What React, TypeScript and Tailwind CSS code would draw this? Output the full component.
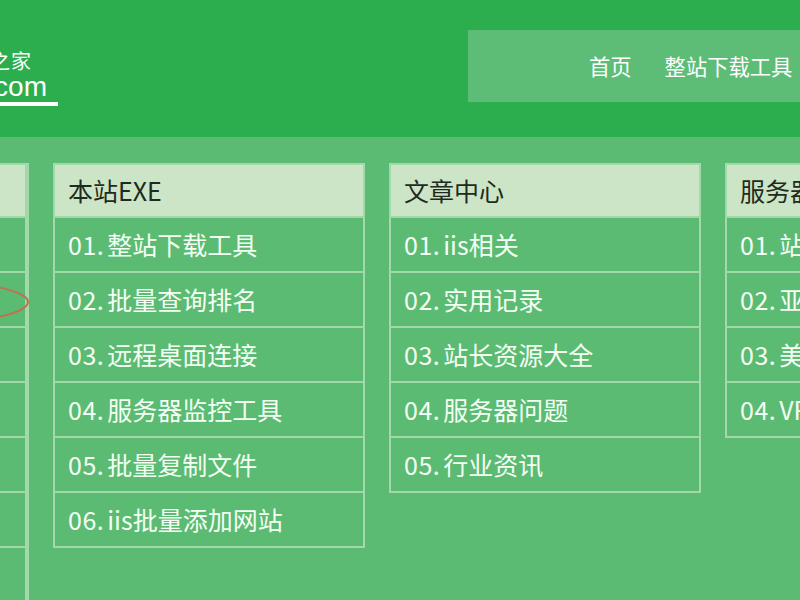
import React from "react";

const columns = [
  {
    title: "友情链接",
    items: ["01.站长", "02.工具", "03.资源", "04.下载", "05.教程", "06.服务", "07.其他"],
  },
  {
    title: "本站EXE",
    items: [
      "01.整站下载工具",
      "02.批量查询排名",
      "03.远程桌面连接",
      "04.服务器监控工具",
      "05.批量复制文件",
      "06.iis批量添加网站",
    ],
  },
  {
    title: "文章中心",
    items: ["01.iis相关", "02.实用记录", "03.站长资源大全", "04.服务器问题", "05.行业资讯"],
  },
  {
    title: "服务器推荐",
    items: ["01.站群服务器", "02.亚洲服务器", "03.美国服务器", "04.VPS主机"],
  },
];

const font = { fontFamily: '"Noto Sans CJK SC", "Noto Sans", sans-serif' };

function Column({ title, items, tall }: { title: string; items: string[]; tall?: boolean }) {
  return (
    <div className={`w-[312px] shrink-0 self-start ${tall ? "h-[460px] border-r-2 border-[#a3d8ab]" : ""}`}>
      <div className="border-2 border-[#a3d8ab]">
        <div className="h-[51px] bg-[#cbe5c6] pl-[13px] flex items-center text-[25px] text-[#1f2a20]">
          {title}
        </div>
        {items.map((item) => {
          const num = item.slice(0, 3);
          const rest = item.slice(3);
          return (
            <div
              key={item}
              className="h-[55px] border-t-2 border-[#a3d8ab] pl-[13px] flex items-center text-[25px] text-[#f4fff4] whitespace-nowrap"
            >
              <span className="mr-[3px] tracking-[0.5px]">{num}</span>
              <span>{rest}</span>
            </div>
          );
        })}
      </div>
    </div>
  );
}

export default function App() {
  return (
    <div className="w-[800px] h-[600px] overflow-hidden bg-[#5bbb73] relative" style={font}>
      {/* top bar */}
      <div className="h-[137px] bg-[#2cae4f] flex items-start">
        <div className="w-[58px] mt-[50px] flex flex-col items-end text-white whitespace-nowrap">
          <div className="text-[20px] leading-[22px] mr-[26px] tracking-[1px]">站长工具之家</div>
          <div
            className="text-[28px] leading-[30px] mr-[11px]"
            style={{ fontFamily: '"Liberation Sans", Arial, sans-serif' }}
          >
            iis7.com
          </div>
          <div className="w-[58px] h-[4px] bg-white" />
        </div>
        <div className="ml-[410px] mt-[30px] h-[72px] flex-1 bg-[#5dbd77] flex items-center pl-[121px] gap-[33px] text-[21.3px] text-white whitespace-nowrap">
          <span>首页</span>
          <span>整站下载工具</span>
          <span>文章中心</span>
        </div>
      </div>

      {/* link columns */}
      <div className="ml-[-283px] mt-[26px] flex gap-[24px]">
        {columns.map((c, i) => (
          <Column key={c.title} title={c.title} items={c.items} tall={i === 0} />
        ))}
      </div>

      {/* hand-drawn annotation */}
      <svg className="absolute left-0 top-[270px]" width="40" height="60" viewBox="0 270 40 60">
        <ellipse cx="-110" cy="302" rx="138" ry="24" fill="none" stroke="#c0714f" strokeWidth="2" />
      </svg>
    </div>
  );
}
